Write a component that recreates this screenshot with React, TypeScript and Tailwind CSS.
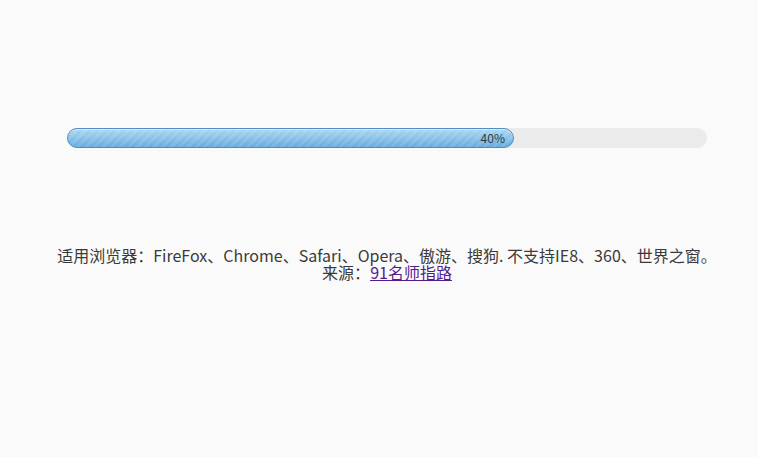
export default function App() {
  const percent = 40;
  return (
    <div className="min-h-[457px] bg-[#fafafa] pl-4 pt-[128px] font-['Noto_Sans_CJK_SC','Noto_Sans',sans-serif] text-[#3a3a3a]">
      <div className="mx-auto h-5 w-[640px] rounded-full bg-[#ebebeb]">
        <div
          className="flex h-5 items-center justify-end rounded-full border border-[#4f8fc6] bg-[repeating-linear-gradient(135deg,rgba(255,255,255,0.1)_0_3px,transparent_3px_6px),linear-gradient(to_bottom,#acd7f2,#67acde)] pr-2 shadow-[inset_0_1px_0_rgba(255,255,255,0.5)]"
          style={{ width: 447 }}
        >
          <span className="text-xs leading-none text-[#2d3b48]">{percent}%</span>
        </div>
      </div>
      <div className="mt-[99px] text-center text-base leading-[17px]">
        <p>适用浏览器：FireFox、Chrome、Safari、Opera、傲游、搜狗. 不支持IE8、360、世界之窗。</p>
        <p>
          来源：<a href="#" className="text-[#551a8b] underline">91名师指路</a>
        </p>
      </div>
    </div>
  );
}
